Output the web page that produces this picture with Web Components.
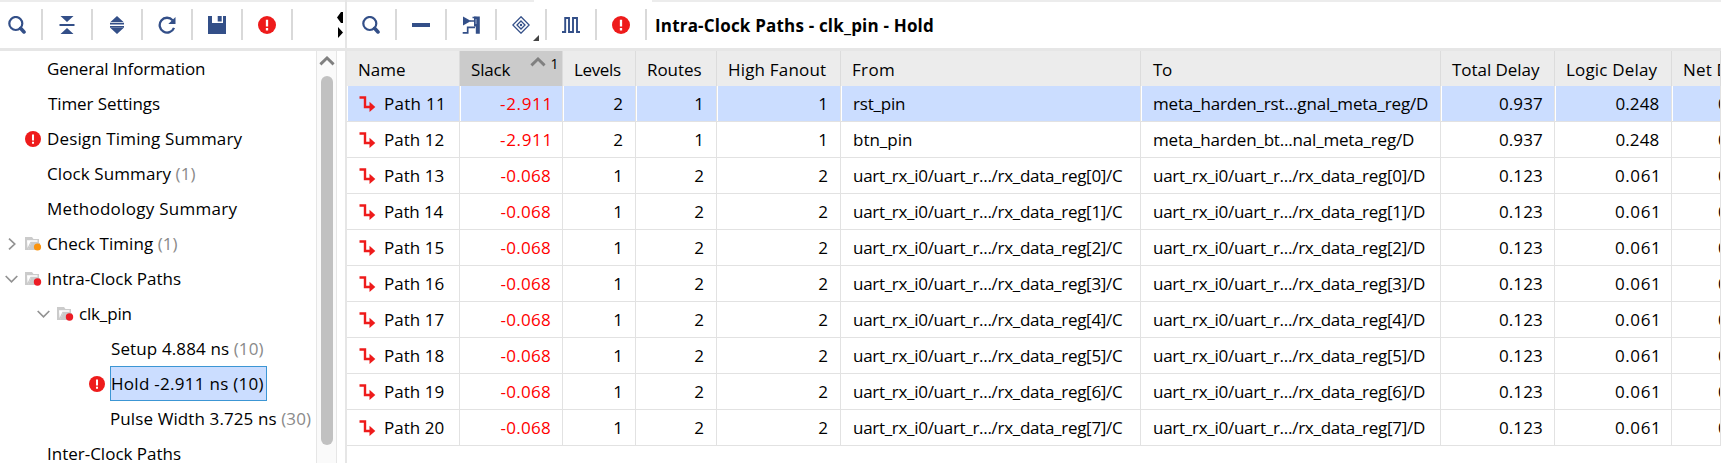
<!DOCTYPE html>
<html lang="en">
<head>
<meta charset="utf-8">
<title>Timing Summary</title>
<style>
html,body{margin:0;height:100%;overflow:hidden;background:#fff}
body{font:17px/35px "Open Sans","Noto Sans",sans-serif;color:#000}
</style>
</head>
<body>
<timing-app></timing-app>
<script>
const define = (name, html, setup) => customElements.define(name, class extends HTMLElement {
  connectedCallback() {
    if (this.shadowRoot) return;
    const t = document.createElement('template');
    t.innerHTML = typeof html === 'function' ? html(this) : html;
    this.attachShadow({mode: 'open'}).append(t.content.cloneNode(true));
    if (setup) setup(this);
  }
});

/* Text whose letter spacing is tuned so its visible width equals the "w" attribute. */
const ctx = document.createElement('canvas').getContext('2d');
define('fit-text', `<style>:host{display:inline-block;white-space:pre;flex:none}</style><slot></slot>`, el => {
  const cs = getComputedStyle(el), w = parseFloat(el.getAttribute('w')), s = el.textContent;
  if (!w) return;
  ctx.font = `${cs.fontWeight} ${cs.fontSize} ${cs.fontFamily}`;
  const m = ctx.measureText(s);
  const ink = m.actualBoundingBoxRight + m.actualBoundingBoxLeft;
  const ls = (w - ink) / (s.length - 1);
  el.style.letterSpacing = ls.toFixed(3) + 'px';
  el.style.marginLeft = m.actualBoundingBoxLeft.toFixed(2) + 'px';
  el.style.marginRight = (-(m.width - m.actualBoundingBoxRight) - ls).toFixed(2) + 'px';
});

const B = '#334f88';
const ICONS = {
  search: [18,18,`<circle cx="7.8" cy="7.5" r="6.5" fill="none" stroke="${B}" stroke-width="2.2"/><path d="M12.6 12.3l3.4 3.6" stroke="${B}" stroke-width="3.6" stroke-linecap="round"/>`],
  collapse: [16,18,`<path d="M1.5 0h13L8 6zM1.5 18h13L8 12z" fill="${B}"/><path d="M.5 9h15" stroke="${B}" stroke-width="2"/>`],
  expand: [16,18,`<path d="M1.5 6h13L8 0zM1.5 12h13L8 18z" fill="${B}"/><path d="M1 7.7h14M1 10.9h14" stroke="${B}" stroke-width="1.8"/>`],
  refresh: [18,18,`<path d="M14.6 4.2A7.4 7.4 0 1 0 16 11.8" fill="none" stroke="${B}" stroke-width="2.3"/><path d="M17.5 1v7h-7.2z" fill="${B}"/>`],
  save: [18,18,`<path d="M0 0h4v7h11V0h3v18H0z" fill="${B}"/><path d="M9.7 0h4v5.5h-4z" fill="${B}"/>`],
  error: [18,18,`<circle cx="9" cy="9" r="9" fill="#ee1b1b"/><path d="M9 3.8v6.8M9 12v2.4" stroke="#fff" stroke-width="2.3"/>`],
  minus: [18,18,`<path d="M0 9h18" stroke="${B}" stroke-width="4"/>`],
  schematic: [18,18,`<path d="M1 .5l8 4.5-8 4.500z" fill="${B}"/><path d="M8 5h5M10.500 1.500h4" fill="none" stroke="${B}" stroke-width="1.600"/><path d="M12 .5h5.800v17.300h-4V10.500H12z" fill="${B}"/><path d="M14 3v5" stroke="#9fb0d0" stroke-width="1"/><path d="M.7 16.800h5V11.300H13" fill="none" stroke="${B}" stroke-width="1.700"/>`],
  diamond: [18,18,`<g fill="none" stroke="${B}" stroke-width="1.3"><path d="M9 .8L17.2 9 9 17.2.8 9z"/><path d="M9 5L13 9 9 13 5 9z"/></g><circle cx="9" cy="9" r="1.2" fill="${B}"/>`],
  wave: [18,18,`<path d="M0 16h3.2V2H7v14h4V2h4v14h3" fill="none" stroke="${B}" stroke-width="1.9"/>`],
  path: [17,16,`<path d="M.5 1.500h5.500V11H12" fill="none" stroke="#ee1b1b" stroke-width="2.4"/><path d="M10.500 5.800l5.800 5.200-5.800 5z" fill="#ee1b1b"/>`],
  forange: [17,14,`<path d="M0 0h7l1.5 2H14v4H6l-3 7H0z" fill="#cbcbcb"/><path d="M2 3.3h10.5v1.4H5.5L2.5 11z" fill="#fff"/><path d="M6 6h9v7H2.8z" fill="#cbcbcb"/><circle cx="12.5" cy="10" r="3.6" fill="#fb930d"/>`],
  fred: [17,14,`<path d="M0 0h7l1.5 2H14v4H6l-3 7H0z" fill="#cbcbcb"/><path d="M2 3.3h10.5v1.4H5.5L2.5 11z" fill="#fff"/><path d="M6 6h9v7H2.8z" fill="#cbcbcb"/><circle cx="12.5" cy="10" r="3.7" fill="#ec1c24"/>`],
  closed: [8,12,`<path d="M1 .7L6.7 6 1 11.3" fill="none" stroke="#929292" stroke-width="1.7"/>`],
  open: [13,8,`<path d="M.7 1L6.5 6.8 12.3 1" fill="none" stroke="#929292" stroke-width="1.7"/>`],
  up: [16,10,`<path d="M1.4 8.4L8 2l6.6 6.4" fill="none" stroke="#808080" stroke-width="2.9"/>`]
};
define('ui-icon', el => {
  const [w, h, body] = ICONS[el.getAttribute('name')];
  const s = el.getAttribute('size');
  return `<style>:host{display:block;flex:none}svg{display:block}</style><svg width="${s || w}" height="${s || h}" viewBox="0 0 ${w} ${h}">${body}</svg>`;
});

define('tool-button', el => `<style>:host{display:flex;box-sizing:border-box;position:relative;width:50px;height:31px;align-items:center;justify-content:center;border-right:2px solid #d9d9d9;flex:none}
.menu{position:absolute;right:6px;bottom:-1px}</style><ui-icon name="${el.getAttribute('icon')}"></ui-icon>${el.hasAttribute('menu') ? '<svg class="menu" width="6" height="6"><path d="M6 0v6H0z" fill="#444"/></svg>' : ''}`);

define('tool-bar', `<style>:host{display:flex;box-sizing:border-box;height:51px;border-bottom:3px solid #e6e6e6;border-top:2px solid #ececec;padding-top:7px;align-items:flex-start;flex:none}</style><slot></slot>`);

define('tree-item', el => {
  const a = n => el.getAttribute(n);
  const sel = el.hasAttribute('selected');
  return `<style>
:host{display:flex;height:35px;align-items:center;flex:none;padding-left:${a('indent') || 0}px}
.tw{width:25px;display:flex;align-items:center;justify-content:center;flex:none;box-sizing:border-box;padding-right:2px}
.ic{width:20px;flex:none;display:flex}
.lb{box-sizing:border-box;height:35px;line-height:${sel ? 33 : 35}px;padding:0 ${sel ? 2 : 3}px 0 ${sel ? 1 : a('indent') ? 2 : 3}px;white-space:pre;${sel ? 'background:#cbddff;border:1px solid #3c96d4;' : ''}}
.lb{margin-left:${sel ? 1 : 0}px}
i{font-style:normal;color:${sel ? '#000' : '#8a8a8a'}}
</style><span class="tw">${a('twisty') ? `<ui-icon name="${a('twisty')}"></ui-icon>` : ''}</span><span class="ic">${a('icon') ? `<ui-icon name="${a('icon')}" ${a('icon') === 'error' ? 'size="16"' : ''}></ui-icon>` : ''}</span><span class="lb"><fit-text w="${a('w')}">${a('label')}${a('count') ? `<i> (${a('count')})</i>` : ''}</fit-text></span>`;
});

define('scroll-bar', `<style>
:host{display:flex;flex-direction:column;align-items:center;box-sizing:border-box;width:21px;background:#fafafa;border:solid #e6e6e6;border-width:0 1px;flex:none;margin-right:8px;padding-top:5px}
.thumb{width:12px;height:369px;margin-top:10px;border-radius:6px;background:#c1c1c1}
</style><ui-icon name="up"></ui-icon><div class="thumb"></div>`);

const COLS = [['Name',46],['Slack',39.5],['Levels',46],['Routes',53.5],['High Fanout',97],['From',41],['To',19],['Total Delay',88],['Logic Delay',90.5],['Net Delay',78]];
const WIDTHS = '113px 103px 73px 81px 124px 300px 300px 114px 117px 49px';
define('path-header', () => `<style>
:host{display:grid;grid-template-columns:${WIDTHS};height:35px;line-height:37px;flex:none;background:#ececec}
div{display:flex;box-sizing:border-box;padding-left:12px;border-right:1px solid #dcdcdc;overflow:hidden;height:35px}
.sort{background:#cbcbcb;padding-left:11px}
.c7{padding-left:11px}
.sort ui-icon{margin:6px 0 0 19px}
.n{font-size:14px;line-height:25px;margin-left:5px}
</style>${COLS.map(([t, w], i) => `<div class="c${i}${i === 1 ? ' sort' : ''}"><fit-text w="${w}">${t}</fit-text>${i === 1 ? '<ui-icon name="up"></ui-icon><span class="n">1</span>' : ''}</div>`).join('')}`);

define('path-row', el => {
  const c = el.getAttribute('values').split('|'), sel = el.hasAttribute('selected');
  const fw = [c[0] === 'Path 11' ? 57 : 58.5, c[1] === '-2.911' ? 48.5 : 49.5, 0, 0, 0, +el.getAttribute('fw'), +el.getAttribute('tw'), 43, c[8] === '0.061' ? 42 : 43, 0];
  return `<style>
:host{display:grid;grid-template-columns:${WIDTHS};height:36px;box-sizing:border-box;border-bottom:1px solid #e2e2e2;line-height:35px;flex:none}
div{display:flex;box-sizing:border-box;border-right:1px solid #e2e2e2;overflow:hidden;height:35px;padding:0 12px 0 13px;${sel ? 'background:#cbddff;box-shadow:inset 1px 0 #fff;' : ''}}
.r{justify-content:flex-end}
.nm{padding-left:12px;align-items:center;padding-right:0}
.nm ui-icon{margin-right:9px;margin-top:1px}
.neg{color:#f00;padding-right:${c[1] === '-2.911' ? 13.5 : 12}px}
.c8{padding-right:${c[8] === '0.061' ? 14 : 12.5}px}
.net{padding:0 0 0 46px}
</style>${c.map((t, i) => `<div class="c${i} ${i === 0 ? 'nm' : i === 1 ? 'r neg' : i === 9 ? 'net' : i === 5 || i === 6 ? '' : 'r'}">${i === 0 ? '<ui-icon name="path"></ui-icon>' : ''}<fit-text w="${fw[i]}">${t}</fit-text></div>`).join('')}`;
});

define('path-table', () => {
  let rows = '';
  for (let i = 0; i < 10; i++) {
    const v = i === 0 ? ['Path 11','-2.911','2','1','1','rst_pin','meta_harden_rst...gnal_meta_reg/D','0.937','0.248','0']
      : i === 1 ? ['Path 12','-2.911','2','1','1','btn_pin','meta_harden_bt...nal_meta_reg/D','0.937','0.248','0']
      : [`Path ${11 + i}`,'-0.068','1','2','2',`uart_rx_i0/uart_r.../rx_data_reg[${i - 2}]/C`,`uart_rx_i0/uart_r.../rx_data_reg[${i - 2}]/D`,'0.123','0.061','0'];
    rows += `<path-row ${i ? '' : 'selected'} values="${v.join('|')}" fw="${[51, 58][i] || 269}" tw="${[274, 260][i] || 271}"></path-row>`;
  }
  return `<style>:host{display:flex;flex-direction:column}</style><path-header></path-header>${rows}`;
});

define('timing-app', `<style>
:host{display:grid;grid-template-columns:345px 1fr;height:463px;overflow:hidden}
section{display:flex;flex-direction:column;min-width:0;overflow:hidden}
.right{border-left:2px solid #e6e6e6}
.body{display:flex;height:412px;overflow:hidden}
.tree{flex:1;min-width:0;overflow:hidden;display:flex;flex-direction:column}
.title{font-weight:700;line-height:34px;margin-left:9px}
.arrows{margin:3px 0 0 44px;flex:none}
.gap{position:absolute;left:534px;top:0;width:118px;height:2px;background:#fff}
</style>
<section class="left">
<tool-bar>
<tool-button icon="search" style="width:43px;padding-right:7px"></tool-button><tool-button icon="collapse"></tool-button><tool-button icon="expand"></tool-button><tool-button icon="refresh"></tool-button><tool-button icon="save"></tool-button><tool-button icon="error"></tool-button>
<svg class="arrows" width="7" height="26"><path d="M6 0v11H4L0 5.500L4 0zM1 15v11l5-5.500z"/></svg>
</tool-bar>
<div class="body"><div class="tree">
<tree-item label="General Information" w="157"></tree-item>
<tree-item label="Timer Settings" w="112"></tree-item>
<tree-item icon="error" label="Design Timing Summary" w="194.500"></tree-item>
<tree-item label="Clock Summary" count="1" w="147.500"></tree-item>
<tree-item label="Methodology Summary" w="189.500"></tree-item>
<tree-item twisty="closed" icon="forange" label="Check Timing" count="1" w="129.500"></tree-item>
<tree-item twisty="open" icon="fred" label="Intra-Clock Paths" w="133"></tree-item>
<tree-item indent="32" twisty="open" icon="fred" label="clk_pin" w="52.500"></tree-item>
<tree-item indent="64" label="Setup 4.884 ns" count="10" w="152.500"></tree-item>
<tree-item indent="64" selected icon="error" label="Hold -2.911 ns" count="10" w="151.500"></tree-item>
<tree-item indent="64" label="Pulse Width 3.725 ns" count="30" w="200"></tree-item>
<tree-item label="Inter-Clock Paths" w="133"></tree-item>
</div><scroll-bar></scroll-bar></div>
</section>
<section class="right">
<tool-bar>
<tool-button icon="search"></tool-button><tool-button icon="minus"></tool-button><tool-button icon="schematic"></tool-button><tool-button icon="diamond" menu></tool-button><tool-button icon="wave"></tool-button><tool-button icon="error"></tool-button>
<div class="title"><fit-text w="277">Intra-Clock Paths - clk_pin - Hold</fit-text></div>
</tool-bar>
<path-table></path-table>
</section>
<div class="gap"></div>`);
</script>
</body>
</html>
